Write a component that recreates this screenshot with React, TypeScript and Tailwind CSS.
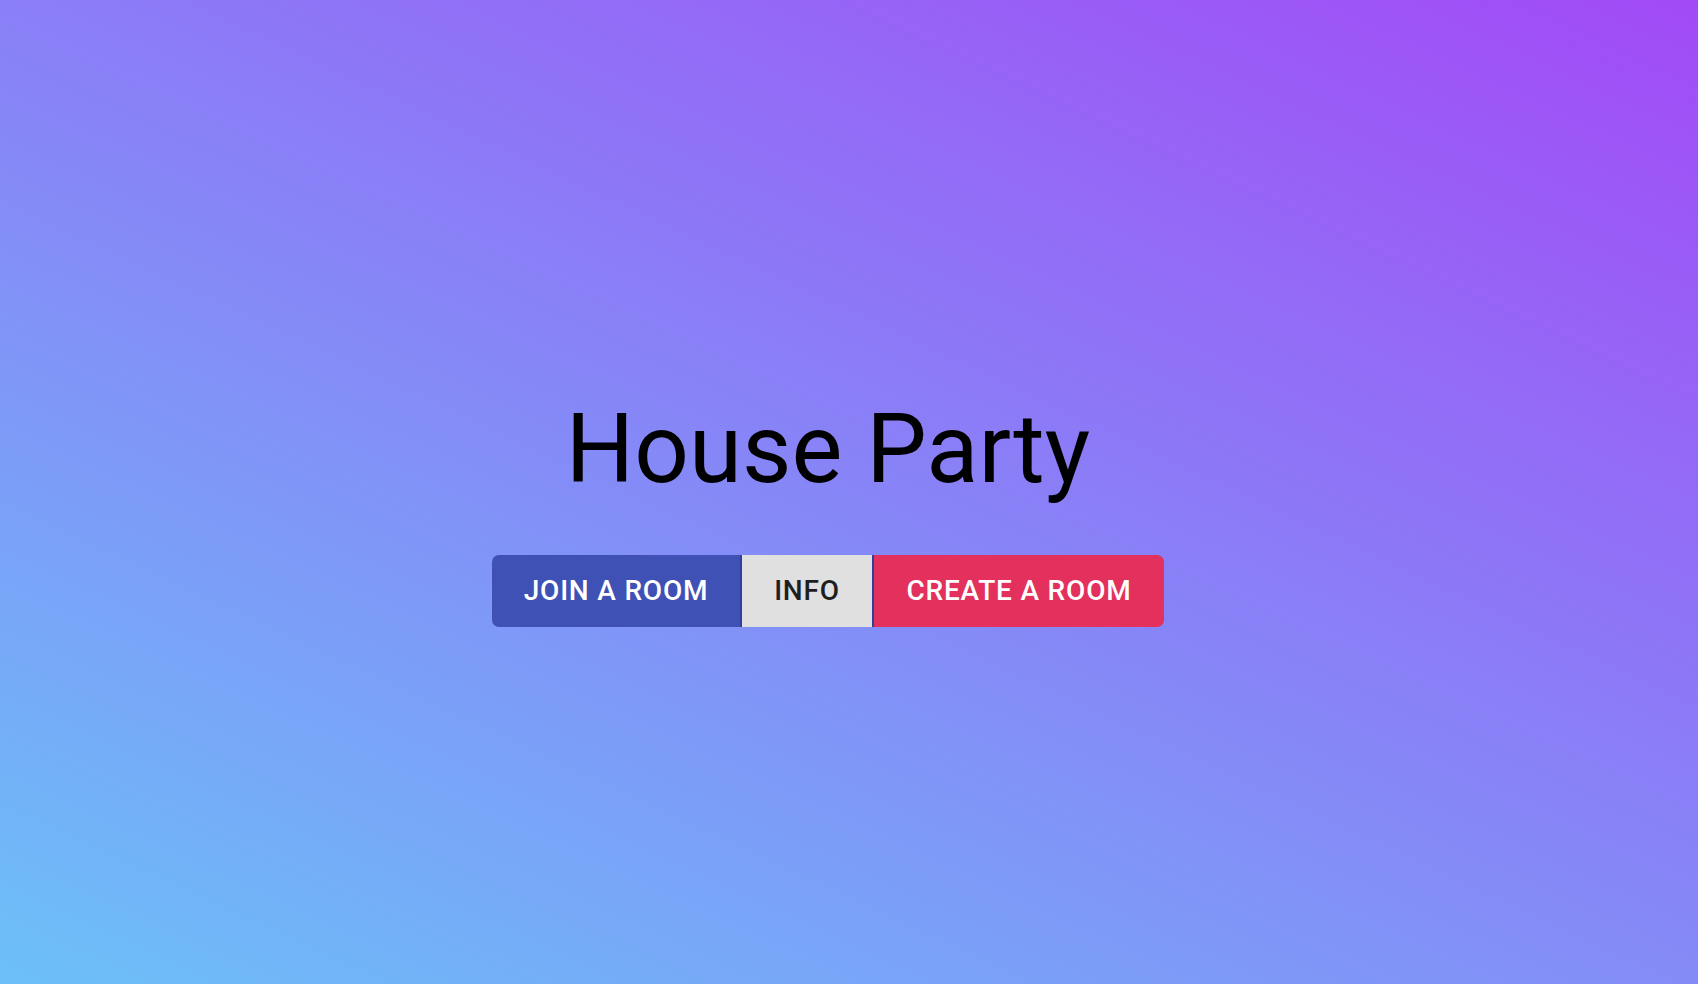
import React from "react";

export default function App() {
  return (
    <div
      className="w-[1698px] h-[984px] overflow-hidden bg-[linear-gradient(25deg,#6cc0f8_0%,#a24af6_100%)]"
      style={{ fontFamily: "Roboto, 'Noto Sans', Arial, sans-serif" }}
    >
      <div className="flex flex-col items-center pt-[393px] pr-[42px]">
        <h1 className="text-[96px] leading-[112px] font-normal text-black m-0">
          House Party
        </h1>
        <div className="mt-[50px] flex h-[72px] rounded-[7px] overflow-hidden">
          <button className="flex items-center justify-center w-[250px] bg-[#3f51b5] text-white text-[28px] font-medium tracking-[0.8px] uppercase border-r-2 border-[#303f9f]">
            Join a Room
          </button>
          <button className="flex items-center justify-center w-[132px] bg-[#e0e0e0] text-[#1e1e1e] text-[28px] font-medium tracking-[0.8px] uppercase border-r-2 border-[#303f9f]">
            Info
          </button>
          <button className="flex items-center justify-center w-[290px] bg-[#e3305c] text-white text-[28px] font-medium tracking-[0.8px] uppercase">
            Create a Room
          </button>
        </div>
      </div>
    </div>
  );
}
